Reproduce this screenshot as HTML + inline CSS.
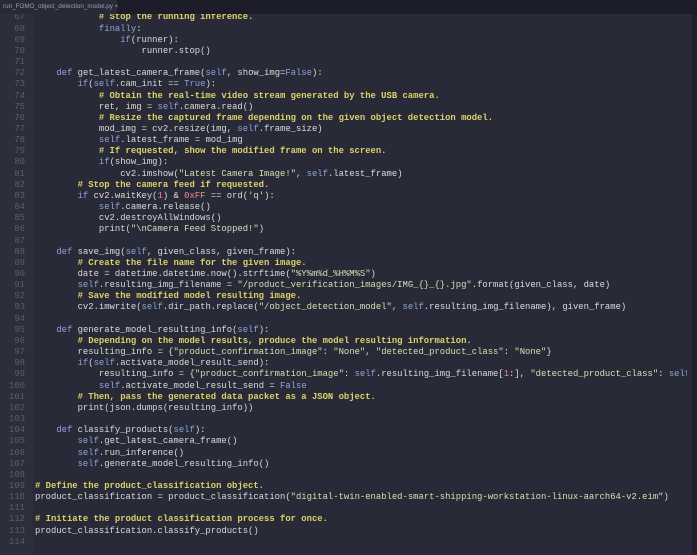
<!DOCTYPE html>
<html><head><meta charset="utf-8"><style>
html,body{margin:0;padding:0;width:697px;height:555px;overflow:hidden;background:#1c1d28;}
.tabbar{position:absolute;left:0;top:0;width:697px;height:14px;background:#1c1d28;}
.tab{position:absolute;left:0;top:0;width:117px;height:14px;background:#272a37;color:#9aa0b0;font:6.3px "Liberation Sans",sans-serif;line-height:14px;padding-left:3px;box-sizing:border-box;white-space:nowrap;}
.ed{position:absolute;left:0;top:14px;width:692px;height:541px;background:#282a37;overflow:hidden;}
.clip{position:absolute;left:0;top:0;width:687px;height:541px;overflow:hidden;}
.edge{position:absolute;left:692px;top:14px;width:5px;height:541px;background:#20222d;}
.gut{position:absolute;left:0;top:0;width:33px;height:541px;background:#2b2e3b;}
pre{margin:0;position:absolute;top:-1.6px;font-family:"Liberation Mono",monospace;font-size:8.9px;line-height:11.15px;white-space:pre;}
.nums{left:0;width:25px;text-align:right;color:#5a5f70;}
.code{left:35px;color:#dcdcdc;}
.k{color:#8fa4dc}.c{color:#ddd26a;font-weight:bold}.s{color:#cfe2b2}.n{color:#f08a8a}
</style></head><body>
<div class="tabbar"><div class="tab">run_FOMO_object_detection_model.py ×</div></div>
<div class="ed"><div class="gut"></div>
<pre class="nums">67
68
69
70
71
72
73
74
75
76
77
78
79
80
81
82
83
84
85
86
87
88
89
90
91
92
93
94
95
96
97
98
99
100
101
102
103
104
105
106
107
108
109
110
111
112
113
114</pre>
<div class="clip">
<pre class="code"><span class="c">            # Stop the running inference.</span>
            <span class="k">finally</span>:
                <span class="k">if</span>(runner):
                    runner.stop()

    <span class="k">def</span> get_latest_camera_frame(<span class="k">self</span>, show_img=<span class="k">False</span>):
        <span class="k">if</span>(<span class="k">self</span>.cam_init == <span class="k">True</span>):
<span class="c">            # Obtain the real-time video stream generated by the USB camera.</span>
            ret, img = <span class="k">self</span>.camera.read()
<span class="c">            # Resize the captured frame depending on the given object detection model.</span>
            mod_img = cv2.resize(img, <span class="k">self</span>.frame_size)
            <span class="k">self</span>.latest_frame = mod_img
<span class="c">            # If requested, show the modified frame on the screen.</span>
            <span class="k">if</span>(show_img):
                cv2.imshow(<span class="s">"Latest Camera Image!"</span>, <span class="k">self</span>.latest_frame)
<span class="c">        # Stop the camera feed if requested.</span>
        <span class="k">if</span> cv2.waitKey(<span class="n">1</span>) &amp; <span class="n">0xFF</span> == ord(<span class="s">'q'</span>):
            <span class="k">self</span>.camera.release()
            cv2.destroyAllWindows()
            print(<span class="s">"\nCamera Feed Stopped!"</span>)

    <span class="k">def</span> save_img(<span class="k">self</span>, given_class, given_frame):
<span class="c">        # Create the file name for the given image.</span>
        date = datetime.datetime.now().strftime(<span class="s">"%Y%m%d_%H%M%S"</span>)
        <span class="k">self</span>.resulting_img_filename = <span class="s">"/product_verification_images/IMG_{}_{}.jpg"</span>.format(given_class, date)
<span class="c">        # Save the modified model resulting image.</span>
        cv2.imwrite(<span class="k">self</span>.dir_path.replace(<span class="s">"/object_detection_model"</span>, <span class="k">self</span>.resulting_img_filename), given_frame)

    <span class="k">def</span> generate_model_resulting_info(<span class="k">self</span>):
<span class="c">        # Depending on the model results, produce the model resulting information.</span>
        resulting_info = {<span class="s">"product_confirmation_image"</span>: <span class="s">"None"</span>, <span class="s">"detected_product_class"</span>: <span class="s">"None"</span>}
        <span class="k">if</span>(<span class="k">self</span>.activate_model_result_send):
            resulting_info = {<span class="s">"product_confirmation_image"</span>: <span class="k">self</span>.resulting_img_filename[<span class="n">1</span>:], <span class="s">"detected_product_class"</span>: <span class="k">self</span>.detected_class}
            <span class="k">self</span>.activate_model_result_send = <span class="k">False</span>
<span class="c">        # Then, pass the generated data packet as a JSON object.</span>
        print(json.dumps(resulting_info))

    <span class="k">def</span> classify_products(<span class="k">self</span>):
        <span class="k">self</span>.get_latest_camera_frame()
        <span class="k">self</span>.run_inference()
        <span class="k">self</span>.generate_model_resulting_info()

<span class="c"># Define the product_classification object.</span>
product_classification = product_classification(<span class="s">"digital-twin-enabled-smart-shipping-workstation-linux-aarch64-v2.eim"</span>)

<span class="c"># Initiate the product classification process for once.</span>
product_classification.classify_products()
</pre>
</div>
</div>
<div class="edge"></div>
</body></html>
